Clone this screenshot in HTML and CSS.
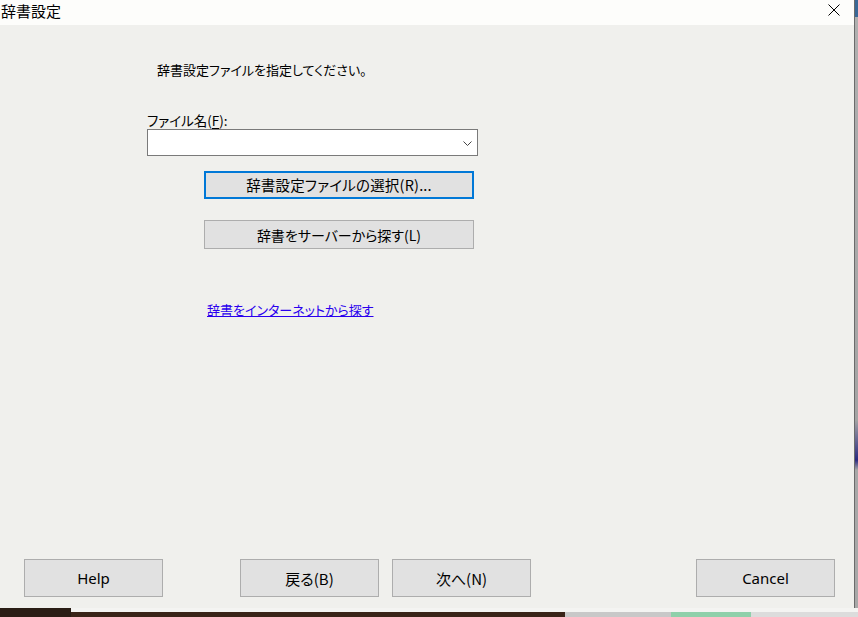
FILE: index.html
```html
<!DOCTYPE html>
<html lang="ja">
<head>
    <meta charset="UTF-8">
    <meta name="viewport" content="width=device-width, initial-scale=1.0">
    <title>辞書設定</title>
    <link rel="stylesheet" href="styles.css">
</head>
<body>
    <div class="screen">
        <div class="dialog">
            <div class="title-bar">
                <span class="title">辞書設定</span>
                <button class="close-button" aria-label="閉じる">
                    <svg width="12" height="12" viewBox="0 0 12 12">
                        <path d="M0.5 0.5 L11.5 11.5 M11.5 0.5 L0.5 11.5" stroke="#000" stroke-width="1" fill="none"/>
                    </svg>
                </button>
            </div>
            <div class="dialog-body">
                <p class="intro">辞書設定ファイルを指定してください。</p>
                <label class="file-label" for="fileName">ファイル名(<u>F</u>):</label>
                <div class="combo">
                    <input type="text" id="fileName" class="combo-input">
                    <svg class="combo-arrow" width="9" height="5" viewBox="0 0 9 5">
                        <path d="M0.5 0.5 L4.5 4.5 L8.5 0.5" stroke="#444" stroke-width="1" fill="none"/>
                    </svg>
                </div>
                <button class="wide-button focused">辞書設定ファイルの選択(R)...</button>
                <button class="wide-button second">辞書をサーバーから探す(L)</button>
                <a class="web-link" href="#">辞書をインターネットから探す</a>

                <div class="footer">
                    <button class="footer-button help">Help</button>
                    <button class="footer-button back">戻る(B)</button>
                    <button class="footer-button next">次へ(N)</button>
                    <button class="footer-button cancel">Cancel</button>
                </div>
            </div>
        </div>
        <div class="side-strip"></div>
    </div>
    <div class="bottom-strip">
        <div class="bottom-dark"></div>
        <div class="bottom-taskbar"></div>
    </div>
</body>
</html>
```

FILE: styles.css
```css
* {
    margin: 0;
    padding: 0;
    box-sizing: border-box;
    font-family: "Noto Sans CJK JP", "Noto Sans", sans-serif;
    font-feature-settings: "palt";
}

body {
    width: 858px;
    height: 617px;
    overflow: hidden;
    background: #2a1d15;
}

.screen {
    display: flex;
    height: 608px;
}

.dialog {
    width: 854px;
    height: 608px;
    display: flex;
    flex-direction: column;
    background: #f0f0ed;
}

.title-bar {
    height: 25px;
    background: #fdfdfb;
    display: flex;
    align-items: flex-start;
    justify-content: space-between;
}

.title {
    font-size: 15px;
    line-height: 21px;
    padding-left: 1px;
    color: #000;
}

.close-button {
    width: 12px;
    height: 12px;
    margin: 4px 14px 0 0;
    background: none;
    border: none;
    display: flex;
}

.dialog-body {
    flex: 1;
    display: flex;
    flex-direction: column;
    align-items: flex-start;
    padding-bottom: 11px;
}

.intro {
    margin: 35px 0 0 157px;
    font-size: 13px;
    line-height: 20px;
    color: #000;
}

.file-label {
    margin: 31px 0 0 147px;
    font-size: 13.5px;
    line-height: 18px;
    color: #000;
}

.file-label u {
    text-decoration-thickness: 1px;
    text-underline-offset: 2px;
}

.combo {
    position: relative;
    margin-left: 147px;
    width: 331px;
    height: 27px;
    border: 1px solid #7a7a7a;
    background: #fff;
}

.combo-input {
    width: 100%;
    height: 100%;
    border: none;
    outline: none;
    background: transparent;
    font-size: 13px;
    padding: 0 22px 0 4px;
}

.combo-arrow {
    position: absolute;
    right: 5px;
    top: 11px;
}

.wide-button {
    margin-left: 204px;
    width: 270px;
    height: 28px;
    background: #e1e1e1;
    border: 1px solid #adadad;
    font-size: 14px;
    line-height: 18px;
    color: #000;
}

.wide-button.focused {
    margin-top: 15px;
    border: 2px solid #0078d7;
    font-size: 14.5px;
    letter-spacing: 0.2px;
}

.wide-button.second {
    margin-top: 21px;
    height: 29px;
}

.web-link {
    margin: 51px 0 0 207px;
    font-size: 13px;
    line-height: 20px;
    color: #2a00ee;
    text-decoration-thickness: 1px;
}

.footer {
    margin-top: auto;
    display: flex;
    padding-left: 24px;
}

.footer-button {
    width: 139px;
    height: 38px;
    background: #e1e1e1;
    border: 1px solid #adadad;
    font-size: 15px;
    color: #000;
}

.footer-button.help,
.footer-button.cancel {
    font-family: "Noto Sans", sans-serif;
}

.footer-button.back {
    margin-left: 77px;
}

.footer-button.next {
    margin-left: 13px;
}

.footer-button.cancel {
    margin-left: 165px;
}

.side-strip {
    flex: 1;
    border-left: 1px solid #6b6b6b;
    background: linear-gradient(#3a6896 0, #3a6896 17px, #b0b0b0 17px, #a4a4a4 420px, #2a2a80 460px, #a8a8a8 470px);
}

.bottom-strip {
    display: flex;
    height: 9px;
}

.bottom-dark {
    width: 71px;
    background: #2a1d15;
}

.bottom-taskbar {
    flex: 1;
    border-top: 4px solid #f4f4f2;
    background: linear-gradient(90deg, #3a2418 0, #3a2418 494px, #c8c8c8 494px, #c8c8c8 600px, #8fd0aa 600px, #8fd0aa 680px, #dcdcdc 680px);
}
```
